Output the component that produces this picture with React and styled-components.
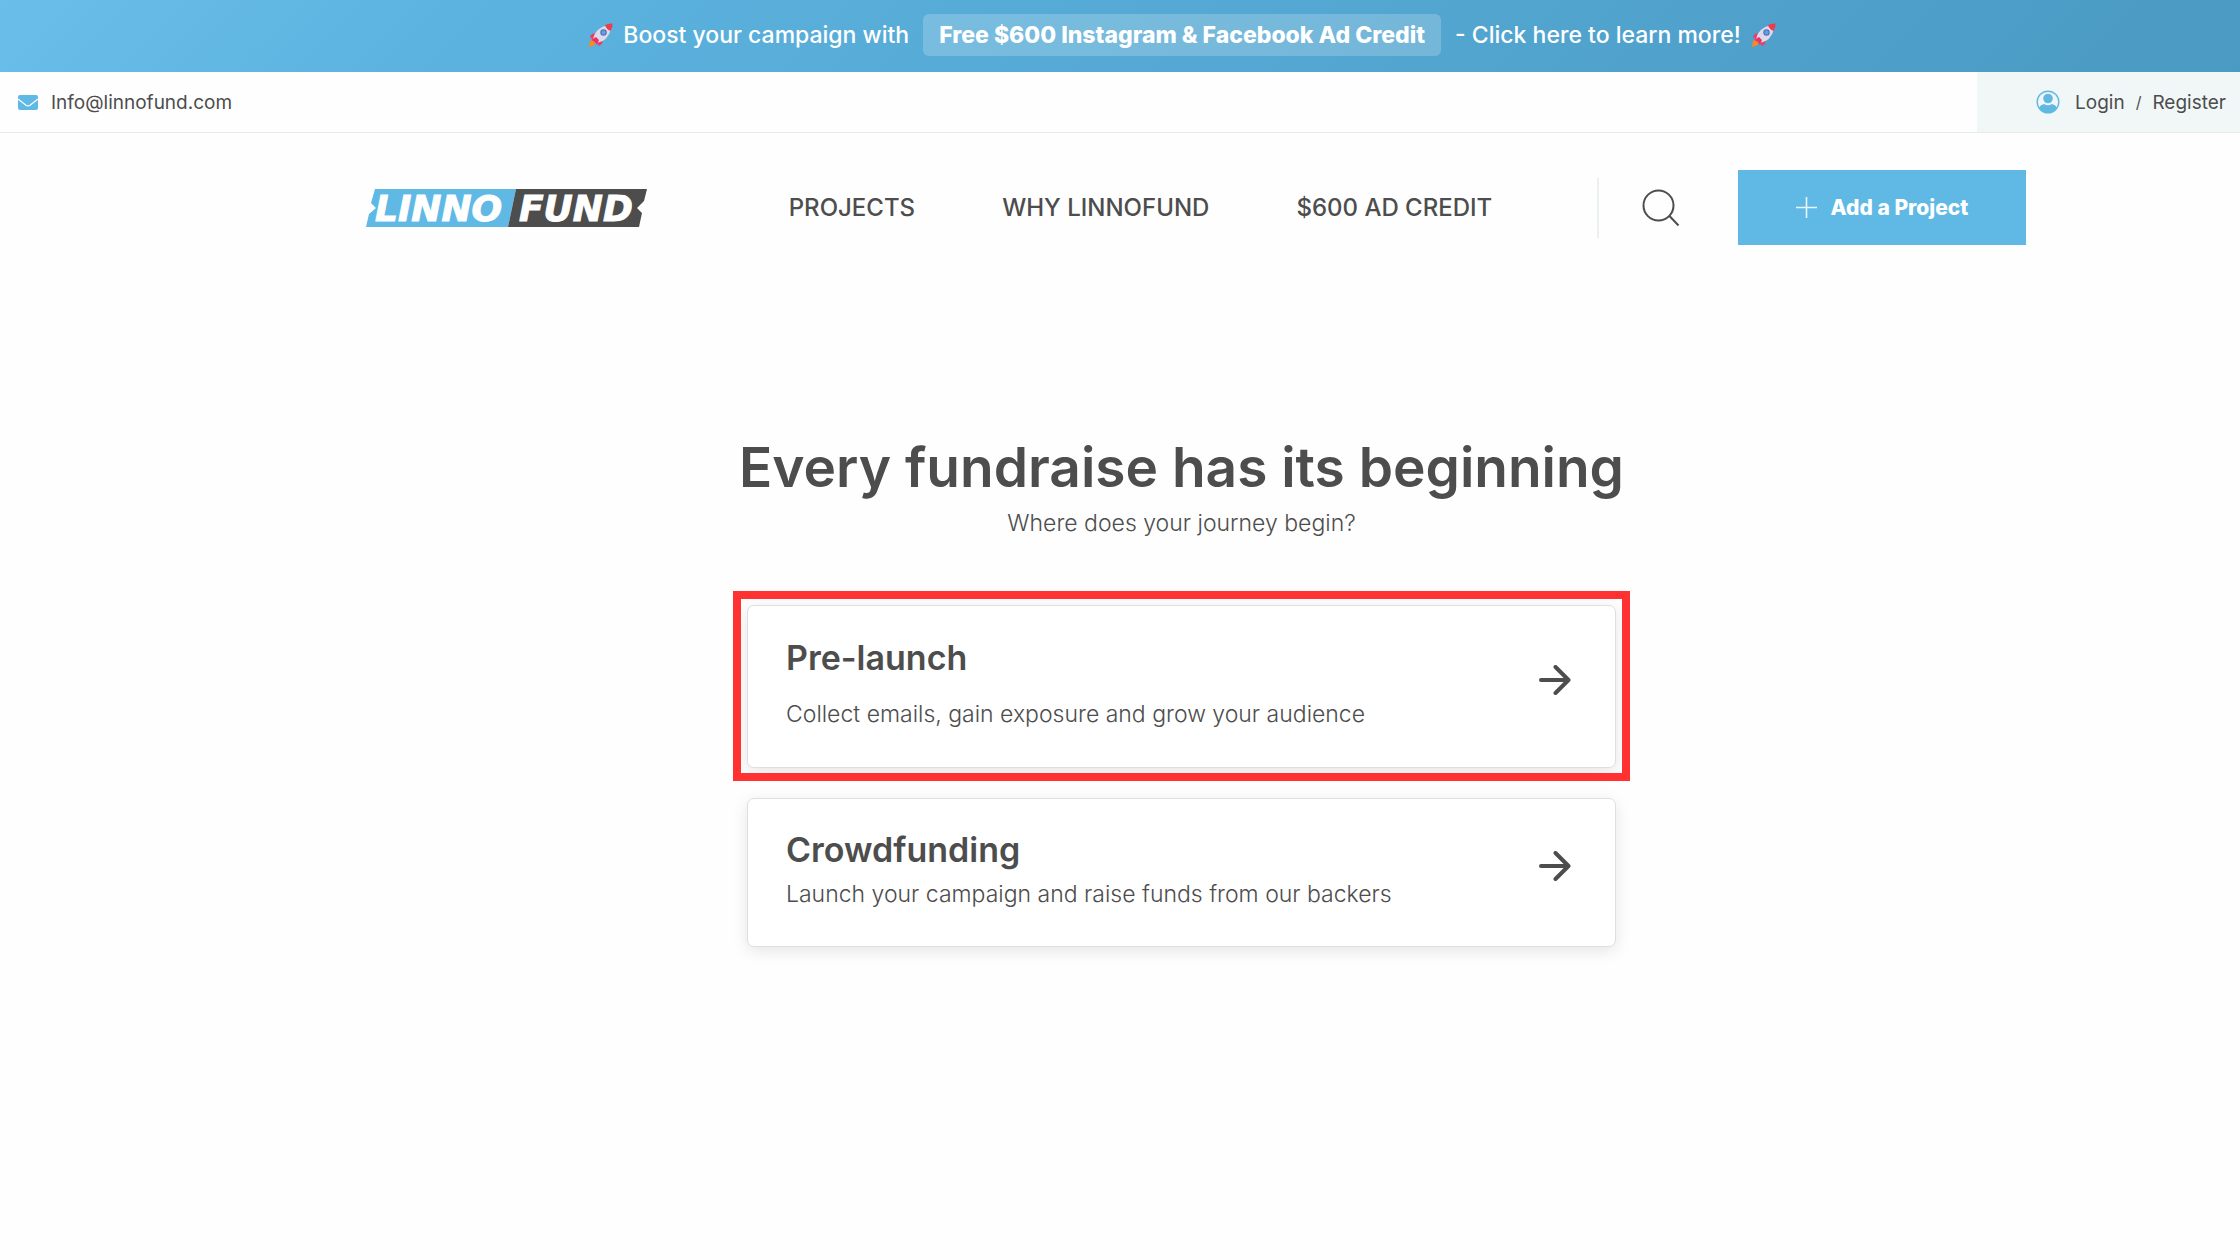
import React from 'react';
import styled, { createGlobalStyle } from 'styled-components';

const GlobalStyle = createGlobalStyle`
  * {
    box-sizing: border-box;
  }
  body {
    margin: 0;
    background: #fefefe;
    color: #4d4d4d;
    font-family: Inter, 'Liberation Sans', sans-serif;
  }
  h1, h2, p {
    margin: 0;
  }
  a {
    color: inherit;
    text-decoration: none;
  }
  svg {
    display: block;
    flex: none;
  }
`;

const Rocket = () => (
  <svg width="25" height="25" viewBox="0 0 25 25" aria-hidden="true">
    <path d="M1 24 L2 18 Q4 15 7 17 Q9 20 6 22 Q4 23.500 1 24Z" fill="#f98a1f" />
    <path d="M9 10 Q3 10 2 14 L6 17Z" fill="#f0386b" />
    <path d="M15 16 Q15 21 11 23 L8 18Z" fill="#f0386b" />
    <path d="M5 16 Q7 5 20 2 Q24 2 23 6 Q20 18 9 20Z" fill="#dcdbea" />
    <path d="M17 2 Q21 0 24.500 0.500 Q25 4 22.500 8 Q18 6 17 2Z" fill="#f03a4f" />
    <path d="M3 17 L8 14 L11 17 L9 22 Q7 18 3 17Z" fill="#e8336a" />
    <circle cx="15.500" cy="9.500" r="3.200" fill="#5568a8" />
    <circle cx="15.500" cy="9.500" r="2.200" fill="#5f9df0" />
  </svg>
);

const Envelope = () => (
  <svg width="20" height="15" viewBox="0 0 20 15" aria-hidden="true">
    <rect width="20" height="15" rx="2" fill="#60b9e5" />
    <path d="M0 4 L8 10.200 Q10 11.500 12 10.200 L20 4" fill="none" stroke="#fff" strokeWidth="1.200" />
  </svg>
);

const UserIcon = () => (
  <svg width="24" height="24" viewBox="0 0 24 24" aria-hidden="true">
    <circle cx="12" cy="12" r="10.800" fill="none" stroke="#60b9e5" strokeWidth="1.400" />
    <circle cx="12" cy="8.500" r="4.800" fill="#60b9e5" />
    <path d="M3 17.500 Q4.500 14.500 8 14 Q12 16.500 16 14 Q19.500 14.500 21 17.500 Q17.500 23 12 23 Q6.500 23 3 17.500Z" fill="#60b9e5" />
  </svg>
);

const Logo = () => (
  <svg width="282" height="54" viewBox="0 -8 282 54" role="img" aria-label="Linnofund">
    <path d="M9 0 H150 L142 38 H0 L3 25 L10 19 L5 14Z" fill="#60b9e5" />
    <path d="M150 0 H281 L278 12 L271 19 L276 24 L273 38 H142Z" fill="#4d4d4d" />
    <g fill="#fff" stroke="#fff" fontFamily="'DejaVu Sans', sans-serif" fontWeight="700" fontStyle="italic" fontSize="36">
      <text x="9" y="32">LINNO</text>
      <text x="153" y="32">FUND</text>
    </g>
  </svg>
);

const SearchIcon = () => (
  <svg width="38" height="38" viewBox="0 0 38 38" fill="none" stroke="#4d4d4d" strokeWidth="2" aria-hidden="true">
    <circle cx="16.500" cy="16.500" r="15" />
    <path d="M27 26.500 L36.500 36.500" />
  </svg>
);

const Plus = () => (
  <svg width="21" height="21" viewBox="0 0 21 21" stroke="#e8f6fd" strokeWidth="1.600" aria-hidden="true">
    <path d="M0 10.500 H21 M10.500 0 V21" />
  </svg>
);

const Arrow = () => (
  <svg width="32" height="30" viewBox="0 0 32 30" fill="none" stroke="#4d4d4d" strokeWidth="4" strokeLinecap="round" strokeLinejoin="round" aria-hidden="true">
    <path d="M2 15 H29 M16.500 2 L29.500 15 L16.500 28" />
  </svg>
);

const links = ['PROJECTS', 'WHY LINNOFUND', '$600 AD CREDIT'];

const options = [
  {
    title: 'Pre-launch',
    text: 'Collect emails, gain exposure and grow your audience',
    highlighted: true,
  },
  {
    title: 'Crowdfunding',
    text: 'Launch your campaign and raise funds from our backers',
    highlighted: false,
  },
];

const OptionCard = ({ title, text, highlighted }) => {
  return (
    <Frame $on={highlighted}>
      <Card href="#" $roomy={highlighted}>
        <CardBody $roomy={highlighted}>
          <CardTitle>{title}</CardTitle>
          <CardText>{text}</CardText>
        </CardBody>
        <Arrow />
      </Card>
    </Frame>
  );
};

const App = () => {
  return (
    <>
      <GlobalStyle />
      <Banner href="#">
        <Rocket />
        <span>Boost your campaign with</span>
        <Pill>Free $600 Instagram &amp; Facebook Ad Credit</Pill>
        <span>- Click here to learn more!</span>
        <Rocket />
      </Banner>
      <TopBar>
        <Email href="mailto:Info@linnofund.com">
          <Envelope />
          Info@linnofund.com
        </Email>
        <Account>
          <UserIcon />
          <a href="#">Login</a>
          <Slash>/</Slash>
          <a href="#">Register</a>
        </Account>
      </TopBar>
      <Header>
        <a href="#">
          <Logo />
        </a>
        <Nav>
          {links.map(link => (
            <a href="#" key={link}>
              {link}
            </a>
          ))}
        </Nav>
        <Actions>
          <SearchButton type="button" aria-label="Search">
            <SearchIcon />
          </SearchButton>
          <AddButton type="button">
            <Plus />
            Add a Project
          </AddButton>
        </Actions>
      </Header>
      <Main>
        <Title>Every fundraise has its beginning</Title>
        <Subtitle>Where does your journey begin?</Subtitle>
        <Options>
          {options.map(option => (
            <OptionCard key={option.title} {...option} />
          ))}
        </Options>
      </Main>
    </>
  );
};

export default App;

const Banner = styled.a`
  display: flex;
  align-items: center;
  justify-content: center;
  gap: 10px;
  min-height: 72px;
  padding: 0 0 2px 124px;
  background: linear-gradient(135deg, #69bfe9 0%, #5cb3df 20%, #4a9ac3 100%);
  color: #fff;
  font-size: 23px;
  font-weight: 500;
  line-height: 32px;
`;

const Pill = styled.strong`
  margin: 0 4px;
  padding: 5px 16px;
  border-radius: 6px;
  background: rgba(255, 255, 255, 0.2);
  font-weight: 800;
`;

const TopBar = styled.div`
  display: flex;
  justify-content: space-between;
  min-height: 61px;
  border-bottom: 1px solid #e3eceb;
  font-size: 19px;
`;

const Email = styled.a`
  display: flex;
  align-items: center;
  gap: 13px;
  padding-left: 18px;
`;

const Account = styled.div`
  display: flex;
  align-items: center;
  padding: 0 14px 0 59px;
  background: #f1f7f7;

  svg {
    margin-right: 15px;
  }
`;

const Slash = styled.span`
  margin: 0 11px;
  font-size: 16px;
`;

const Header = styled.header`
  display: flex;
  align-items: center;
  justify-content: space-between;
  min-height: 149px;
  padding: 0 214px 0 366px;
`;

const Nav = styled.nav`
  display: flex;
  gap: 87px;
  margin-left: 36px;
  font-size: 24px;
  font-weight: 500;
`;

const Actions = styled.div`
  display: flex;
  align-items: center;
`;

const SearchButton = styled.button`
  height: 60px;
  padding: 0 58px 0 43px;
  border: 0;
  border-left: 2px solid #eaf1f0;
  background: none;
`;

const AddButton = styled.button`
  display: flex;
  align-items: center;
  justify-content: center;
  gap: 14px;
  width: 288px;
  height: 75px;
  border: 0;
  background: #60b9e5;
  color: #fff;
  font-family: inherit;
  font-size: 21px;
  font-weight: 800;
`;

const Main = styled.main`
  display: flex;
  flex-direction: column;
  align-items: center;
  padding: 149px 0 48px 123px;
`;

const Title = styled.h1`
  font-size: 55px;
  font-weight: 600;
  line-height: 72px;
`;

const Subtitle = styled.p`
  margin-top: 4px;
  font-size: 23px;
  font-weight: 300;
  line-height: 32px;
`;

const Options = styled.div`
  display: flex;
  flex-direction: column;
  align-items: center;
  gap: 17px;
  width: 100%;
  margin-top: 52px;
`;

const Frame = styled.div`
  width: 100%;
  max-width: ${props => (props.$on ? '897px' : '869px')};
  padding: ${props => (props.$on ? '6px 6px 5px' : 0)};
  border: ${props => (props.$on ? '8px solid #ff3131' : 0)};
  overflow: ${props => (props.$on ? 'hidden' : 'visible')};
`;

const Card = styled.a`
  display: flex;
  align-items: center;
  justify-content: space-between;
  min-height: ${props => (props.$roomy ? '163px' : '149px')};
  padding: 0 44px 14px 38px;
  border: 1px solid #dfdfdf;
  border-radius: 7px;
  background: #fff;
  box-shadow: 0 4px 16px rgba(0, 0, 0, 0.1);
`;

const CardBody = styled.div`
  display: grid;
  gap: ${props => (props.$roomy ? '16px' : '4px')};
  padding-top: 8px;
`;

const CardTitle = styled.h2`
  font-size: 34px;
  font-weight: 600;
  line-height: 44px;
`;

const CardText = styled.p`
  font-size: 23px;
  font-weight: 300;
  line-height: 36px;
`;
